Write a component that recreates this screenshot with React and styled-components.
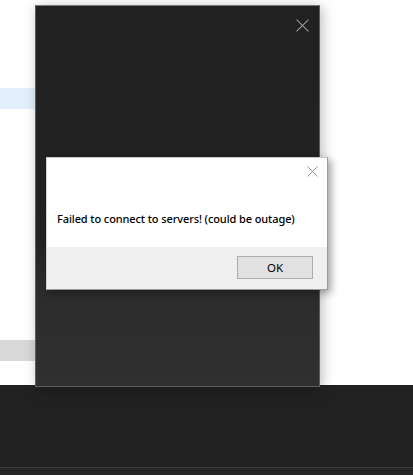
import React from 'react'
import styled, { createGlobalStyle } from 'styled-components'

const GlobalStyles = createGlobalStyle`
    html, body {
        margin: 0;
        padding: 0;
        background: #ffffff;
    }
    body {
        font-family: "Liberation Sans", Arial, sans-serif;
    }
`

// SCREEN
const Screen = styled.div`
    position: relative;
    display: flex;
    flex-direction: column;
    width: 413px;
    height: 475px;
    overflow: hidden;
`
const Desktop = styled.div`
    height: 385px;
    background: #ffffff;
    display: flex;
`
const BackList = styled.div`
    width: 35px;
    display: flex;
    flex-direction: column;
    padding-top: 88px;
`
const BackRow = styled.div`
    height: 21px;
    margin-top: ${p => p.gap || 0}px;
    background: ${p => p.tone === 'blue' ? '#e3f0fb' : '#d9d9d9'};
`
const Taskbar = styled.div`
    flex: 1;
    display: flex;
    flex-direction: column;
    background: #212121;
`
const TaskbarFill = styled.div`
    flex: 1;
`
const TaskbarEdge = styled.div`
    height: 7px;
    border-top: 1px solid #3c3c3c;
    background: #272727;
`

// DARK WINDOW
const DarkWindow = styled.div`
    position: absolute;
    left: 35px;
    top: 5px;
    width: 285px;
    height: 382px;
    box-sizing: border-box;
    border: 1px solid #5c5c5c;
    border-top-color: #7a7a7a;
    background: linear-gradient(#212121 0%, #232323 62%, #2c2c2c 74%, #303030 100%);
    box-shadow: 2px 2px 12px rgba(0, 0, 0, 0.28);
    display: flex;
    justify-content: flex-end;
    align-items: flex-start;
    padding: 13px 10px 0 0;
`
const CloseGlyph = styled.svg`
    display: block;
    width: ${p => p.size}px;
    height: ${p => p.size}px;
`

// MESSAGE BOX
const Dialog = styled.div`
    position: absolute;
    left: 46px;
    top: 157px;
    width: 282px;
    height: 133px;
    box-sizing: border-box;
    border: 1px solid #9b9b9b;
    border-top-color: #c8c8c8;
    border-left-color: #d0d0d0;
    background: #ffffff;
    box-shadow: 3px 3px 8px rgba(0, 0, 0, 0.35);
    display: flex;
    flex-direction: column;
`
const DialogBody = styled.div`
    height: 89px;
    display: flex;
    flex-direction: column;
`
const DialogTitleBar = styled.div`
    display: flex;
    justify-content: flex-end;
    padding: 8px 9px 0 0;
    height: 24px;
    box-sizing: border-box;
`
const Message = styled.p`
    margin: 30px 0 0 10px;
    font-family: "Noto Sans", "Liberation Sans", Arial, sans-serif;
    font-size: 11px;
    font-weight: 500;
    line-height: 14px;
    color: #000000;
    letter-spacing: -0.1px;
`
const DialogFooter = styled.div`
    flex: 1;
    background: #f0f0f0;
    display: flex;
    justify-content: flex-end;
    align-items: flex-start;
    padding: 9px 14px 0 0;
`
const Button = styled.button`
    width: 76px;
    height: 23px;
    padding: 0;
    border: 1px solid #adadad;
    background: #e1e1e1;
    font-family: "Noto Sans", "Liberation Sans", Arial, sans-serif;
    font-size: 11.5px;
    font-weight: 400;
    color: #000000;
    box-shadow: inset 0 0 0 1px #e1e1e1;
    cursor: default;
`

const Cross = ({ size, color }) => (
    <CloseGlyph size={size} viewBox="0 0 12 12">
        <path d="M0.5 0.5 L11.5 11.5 M11.5 0.5 L0.5 11.5" stroke={color} strokeWidth="1" fill="none" />
    </CloseGlyph>
)

const App = () => {
    return (
        <>
            <GlobalStyles />
            <Screen>
                <Desktop>
                    <BackList>
                        <BackRow tone="blue" />
                        <BackRow tone="gray" gap={231} />
                    </BackList>
                </Desktop>
                <Taskbar>
                    <TaskbarFill />
                    <TaskbarEdge />
                </Taskbar>

                <DarkWindow>
                    <Cross size={13} color="#9a9a9a" />
                </DarkWindow>

                <Dialog>
                    <DialogBody>
                        <DialogTitleBar>
                            <Cross size={11} color="#8a8a8a" />
                        </DialogTitleBar>
                        <Message>Failed to connect to servers! (could be outage)</Message>
                    </DialogBody>
                    <DialogFooter>
                        <Button>OK</Button>
                    </DialogFooter>
                </Dialog>
            </Screen>
        </>
    )
}

export default App
